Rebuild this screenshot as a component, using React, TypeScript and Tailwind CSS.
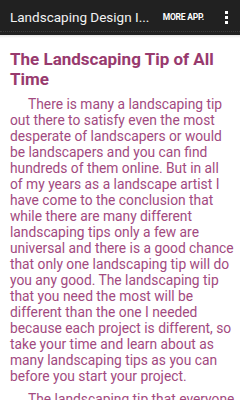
const para1 = [
  'There is many a landscaping tip',
  'out there to satisfy even the most',
  'desperate of landscapers or would',
  'be landscapers and you can find',
  'hundreds of them online. But in all',
  'of my years as a landscape artist I',
  'have come to the conclusion that',
  'while there are many different',
  'landscaping tips only a few are',
  'universal and there is a good chance',
  'that only one landscaping tip will do',
  'you any good. The landscaping tip',
  'that you need the most will be',
  'different than the one I needed',
  'because each project is different, so',
  'take your time and learn about as',
  'many landscaping tips as you can',
  'before you start your project.',
];

export default function App() {
  return (
    <div className="w-[240px] h-[400px] overflow-hidden bg-white" style={{ fontFamily: 'Roboto, "Noto Sans", sans-serif' }}>
      <div className="relative h-[35px] bg-[#212121] flex items-center pl-[10px] pr-[8px]">
        <span className="text-[#f2f2f2] text-[13.5px] whitespace-nowrap">Landscaping Design I...</span>
        <span className="ml-auto text-white text-[8.5px] font-bold tracking-tight">MORE APP.</span>
        <div className="ml-[21px] mr-[4px] flex flex-col gap-[2px]">
          <span className="w-[3px] h-[3px] bg-white" />
          <span className="w-[3px] h-[3px] bg-white" />
          <span className="w-[3px] h-[3px] bg-white" />
        </div>
        <div className="absolute left-0 right-0 bottom-[3px] h-px border-b border-dotted border-[#3c3c3c]" />
      </div>
      <div className="h-[3px] bg-gradient-to-b from-[#e6e6e6] to-white" />
      <div className="pl-[10px] pr-[4px] pt-[11px]">
        <h1 className="text-[#983a6e] text-[17px] font-bold leading-[20px]">
          The Landscaping Tip of All
          <br />
          Time
        </h1>
        <p className="mt-[7px] text-[#a24a80] text-[13.8px] leading-[16px] whitespace-nowrap">
          {para1.map((line, i) => (
            <span key={i} className={`block ${i === 0 ? 'pl-[18px]' : ''}`}>{line}</span>
          ))}
        </p>
        <p className="mt-[7px] pl-[18px] text-[#a24a80] text-[13.8px] leading-[16px] whitespace-nowrap">
          The landscaping tip that everyone
        </p>
      </div>
    </div>
  );
}
